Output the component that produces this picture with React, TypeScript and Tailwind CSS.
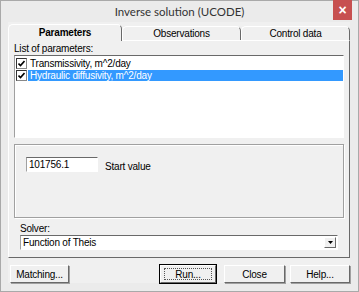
const font = { fontFamily: '"Liberation Sans", Arial, sans-serif' };

function Tab({ label, active, className }: { label: string; active?: boolean; className?: string }) {
  return (
    <div
      className={
        "flex items-center justify-center rounded-t-[5px] border-l border-t border-r border-l-white border-t-white border-r-[#696969] bg-[#f0f0f0] text-[10px] tracking-[-0.2px] text-black " +
        (active ? "relative z-10 -mb-px h-[17px] pb-[1px] font-bold" : "h-[14px]") +
        " " +
        (className ?? "")
      }
    >
      {label}
    </div>
  );
}

function Button({ label, focused, className }: { label: string; focused?: boolean; className?: string }) {
  return (
    <div
      className={
        "flex h-[18px] items-center justify-center border border-l-white border-t-white border-r-[#696969] border-b-[#696969] bg-[#f0f0f0] text-[10px] tracking-[-0.2px] text-black shadow-[1px_1px_0_#a0a0a0] " +
        (focused ? "outline outline-1 outline-black " : "") +
        (className ?? "")
      }
    >
      {focused ? (
        <span className="flex h-[12px] w-[calc(100%-6px)] items-center justify-center border border-dotted border-[#555]">{label}</span>
      ) : (
        label
      )}
    </div>
  );
}

function Check() {
  return (
    <div className="flex h-[11px] w-[11px] shrink-0 items-center justify-center border border-l-[#333] border-t-[#333] border-r-[#888] border-b-[#888] bg-white">
      <svg width="7" height="7" viewBox="0 0 7 7">
        <path d="M0.5 3.5l2 2 4-4.5" stroke="black" strokeWidth="1.6" fill="none" />
      </svg>
    </div>
  );
}

export default function App() {
  return (
    <div style={font} className="flex h-[292px] w-[359px] flex-col border border-[#a9a9a9] bg-[#ebebeb]">
      <div className="relative flex h-[21px] shrink-0 items-center justify-center">
        <span className="text-[11.5px] text-[#333]" style={{ fontFamily: 'Lato, "Noto Sans", sans-serif' }}>
          Inverse solution (UCODE)
        </span>
        <div className="absolute right-[6px] top-[-1px] flex h-[20px] w-[19px] items-center justify-center bg-[#c75050] text-[14px] font-bold leading-none text-white">
          ×
        </div>
      </div>

      <div className="flex h-[269px] flex-col pl-[7px] pr-[8px]">
        <div className="flex h-[261px] flex-col bg-[#f0f0f0] pt-[3px]">
          <div className="flex h-[15px] items-end">
            <Tab label="Parameters" active className="w-[114px]" />
            <Tab label="Observations" className="w-[119px]" />
            <Tab label="Control data" className="w-[109px]" />
          </div>

          <div className="flex h-[218px] flex-col border border-l-white border-t-white border-r-[#696969] border-b-[#696969] px-[5px] pt-[3px]">
            <div className="h-[10px] text-[10px] leading-[10px] tracking-[-0.2px] text-black">List of parameters:</div>
            <div className="mt-[1px] h-[83px] border border-l-[#a0a0a0] border-t-[#696969] border-r-white border-b-white bg-white pl-[1px] pt-[1px]">
              <div className="flex h-[12px] items-center">
                <Check />
                <span className="ml-[1px] pl-[2px] text-[10px] leading-[11px] tracking-[-0.2px] text-black">Transmissivity, m^2/day</span>
              </div>
              <div className="flex h-[12px] items-center">
                <Check />
                <span className="ml-[1px] flex-1 bg-[#3399ff] pl-[2px] text-[10px] leading-[11px] tracking-[-0.2px] text-white">
                  Hydraulic diffusivity, m^2/day
                </span>
              </div>
            </div>

            <div className="mt-[6px] h-[74px] border border-[#a0a0a0] pl-[11px] pt-[12px] shadow-[inset_1px_1px_0_white,1px_1px_0_white]">
              <div className="flex items-end">
                <div className="flex h-[15px] w-[72px] items-center border border-l-[#a0a0a0] border-t-[#696969] border-r-white border-b-white bg-white pl-[2px] text-[10px] tracking-[-0.2px] text-black">
                  101756.1
                </div>
                <span className="ml-[7px] text-[10px] leading-[11px] tracking-[-0.2px] text-black">Start value</span>
              </div>
            </div>

            <div className="mt-[6px] h-[10px] pl-[6px] text-[10px] leading-[10px] tracking-[-0.2px] text-black">Solver:</div>
            <div className="mx-[6px] mt-[1px] flex h-[15px] items-center border border-l-[#a0a0a0] border-t-[#696969] border-r-white border-b-white bg-white pl-[2px] text-[10px] tracking-[-0.2px] text-black">
              <span className="flex-1">Function of Theis</span>
              <div className="mr-[1px] flex h-[11px] w-[12px] items-center justify-center border border-l-white border-t-white border-r-[#696969] border-b-[#696969] bg-[#f0f0f0]">
                <svg width="5" height="3" viewBox="0 0 5 3">
                  <path d="M0 0h5L2.5 3z" fill="black" />
                </svg>
              </div>
            </div>
          </div>

          <div className="mt-[7px] flex h-[18px]">
            <Button label="Matching..." className="ml-[2px] w-[59px]" />
            <Button label="Run..." focused className="ml-[91px] w-[56px]" />
            <Button label="Close" className="ml-[8px] w-[61px]" />
            <Button label="Help..." className="ml-[5px] w-[60px]" />
          </div>
        </div>
      </div>
    </div>
  );
}
